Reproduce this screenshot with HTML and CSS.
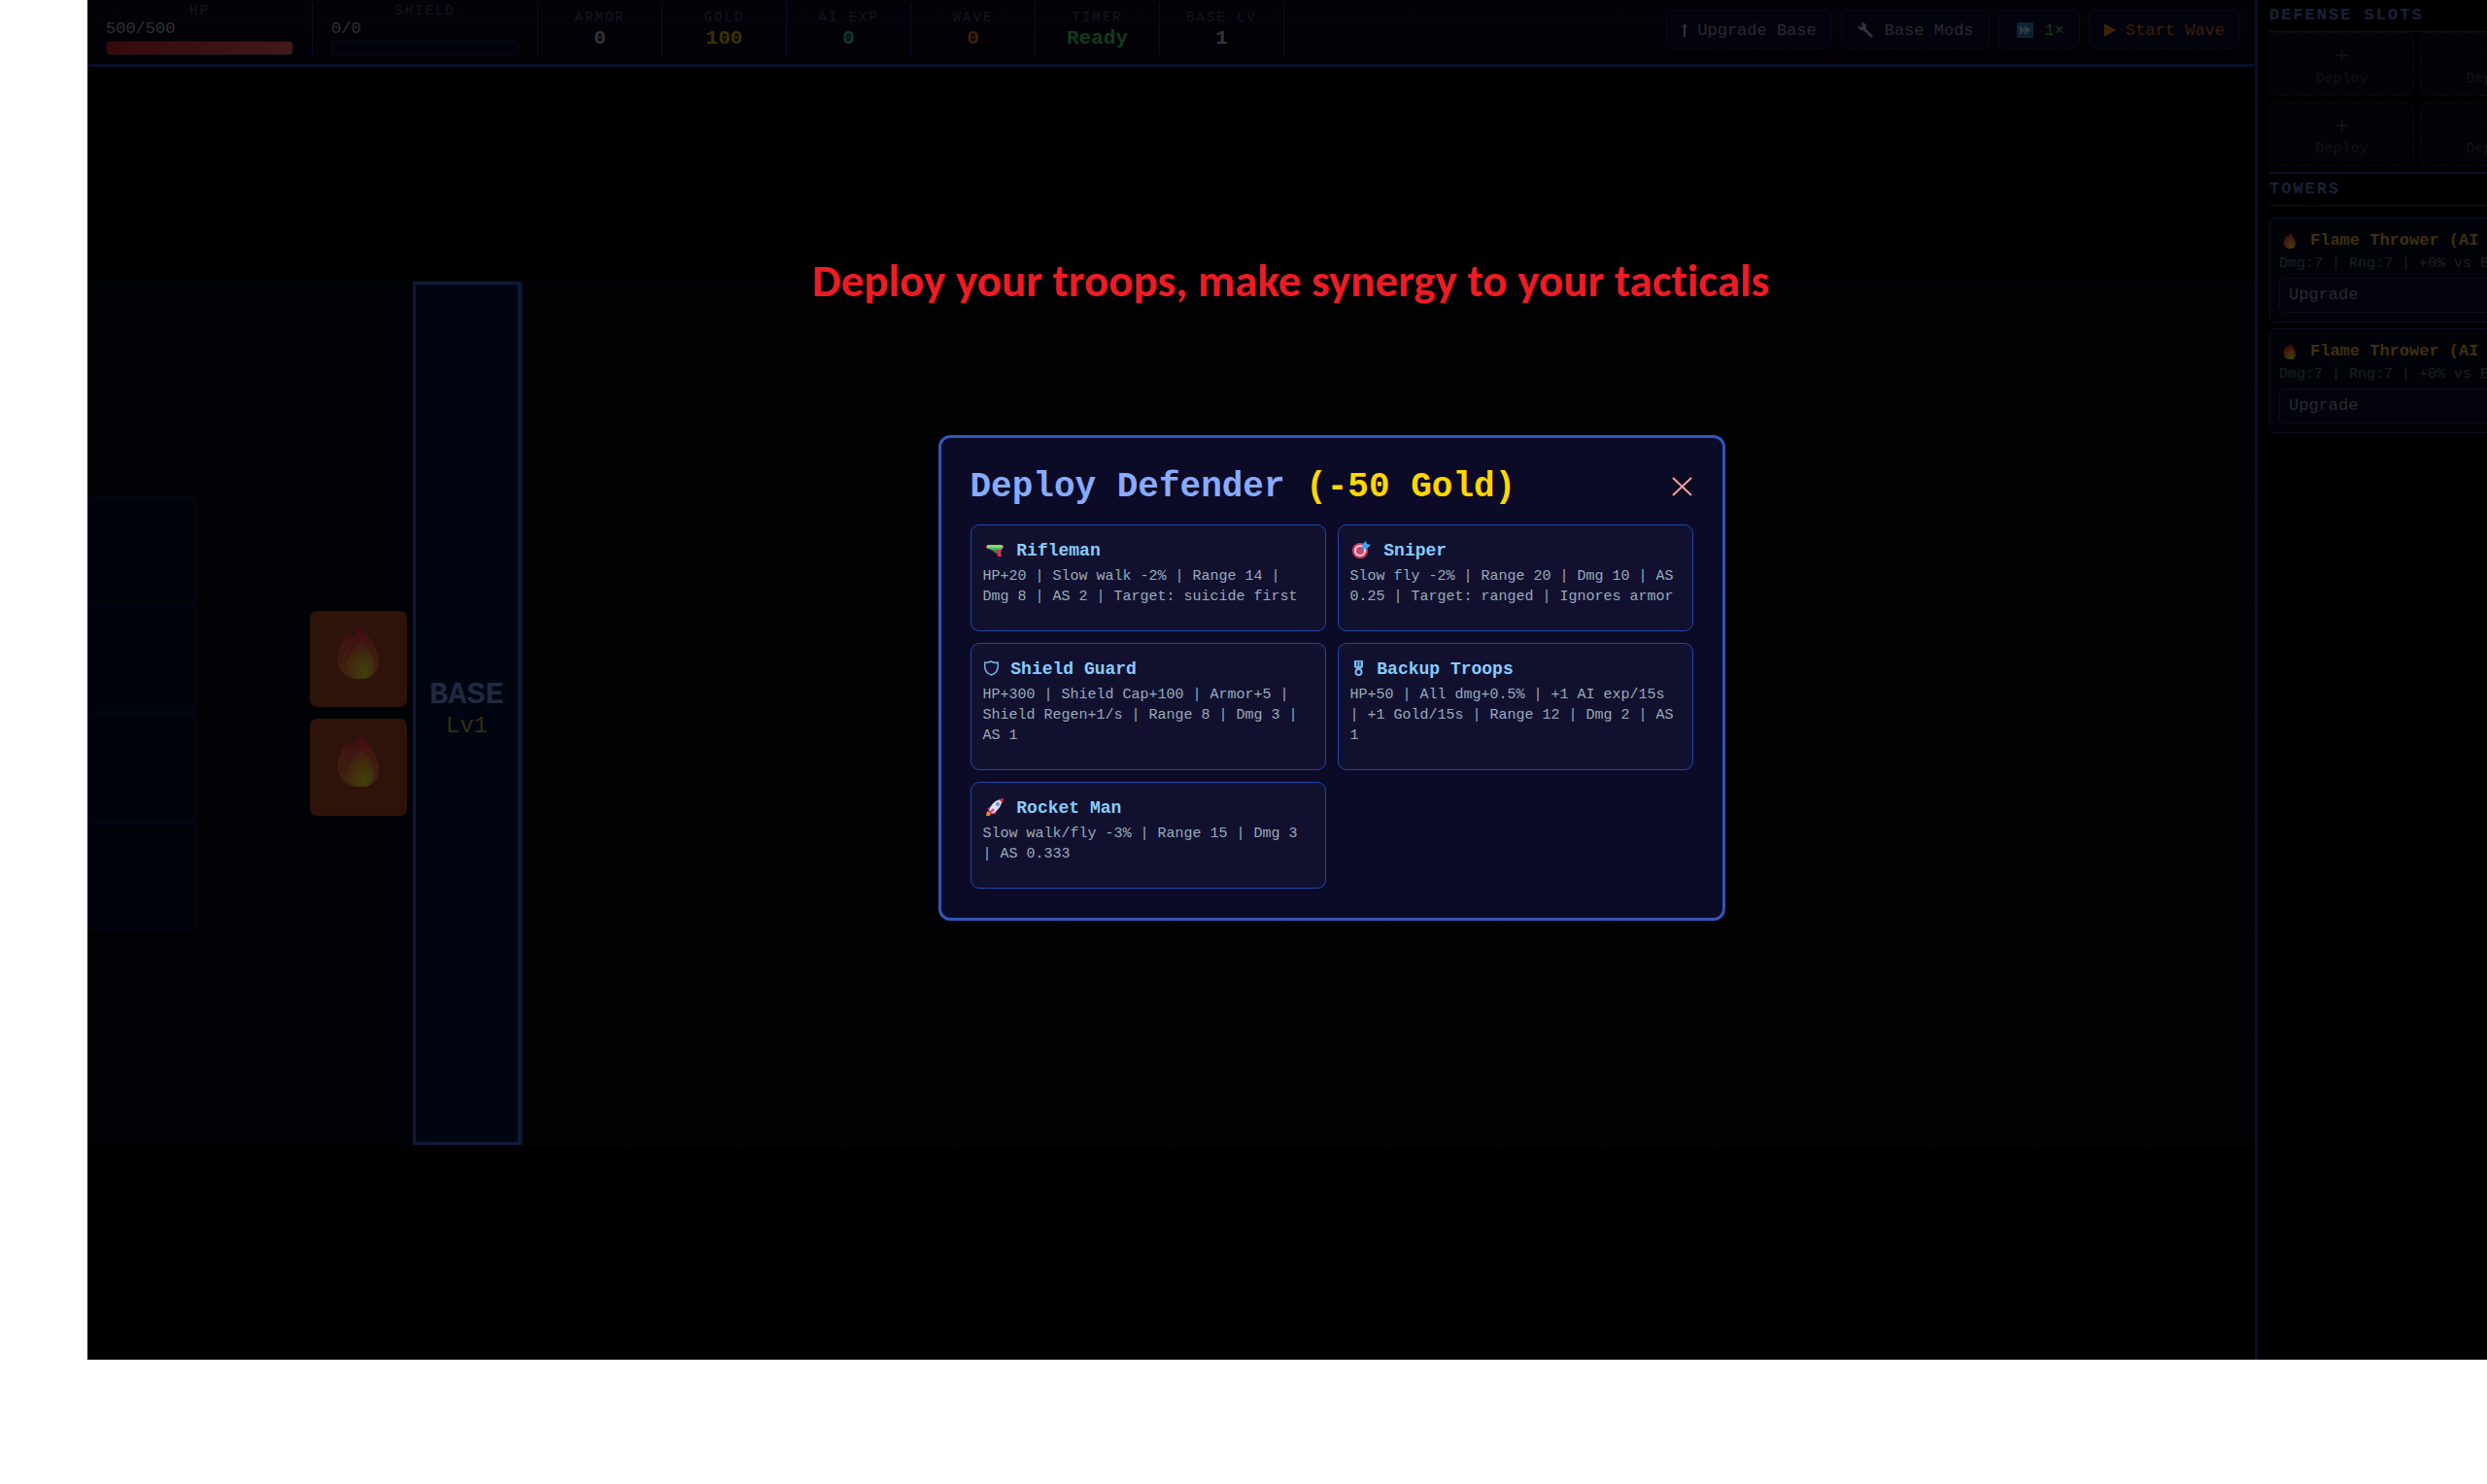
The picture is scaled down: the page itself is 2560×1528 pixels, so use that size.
FILE: index.html
```html
<!DOCTYPE html>
<html lang="en">
<head>
    <meta charset="UTF-8" />
    <meta name="viewport" content="width=device-width, initial-scale=1.0" />
    <title>Base Defense</title>
    <link rel="stylesheet" href="styles.css">
</head>

<body>
<!-- shared icons -->
<svg class="defs" width="0" height="0" aria-hidden="true">
    <defs>
        <linearGradient id="flameOuter" x1="0" y1="0" x2="0" y2="1">
            <stop offset="0" stop-color="#430a12" />
            <stop offset="0.5" stop-color="#401b10" />
            <stop offset="1" stop-color="#40220f" />
        </linearGradient>
        <radialGradient id="flameInner" cx="0.65" cy="0.8" r="0.7">
            <stop offset="0" stop-color="#42400a" />
            <stop offset="1" stop-color="#40200f" />
        </radialGradient>
        <symbol id="flame" viewBox="0 0 42 54">
            <path fill="url(#flameOuter)" d="M22 0C31 9 42 23 42 36C42 46 36 54 26 54H17C7 52 0 45 0 34C0 24 4 14 9 9C11 10 12 11 14 12C18 9 20 5 22 0Z" />
            <path fill="none" stroke="#36160e" stroke-width="1" d="M3 38C3 28 9 20 14 13M6 40C8 29 17 21 21 9" />
            <path fill="url(#flameInner)" d="M25 17C32 22 37 33 37 41C37 49 32 54 26 54H19C12 52 8 48 8 42C9 33 15 23 25 17Z" />
        </symbol>
    </defs>
</svg>

<div class="app">
    <div class="game">
        <header class="topbar">
            <div class="stat stat-bar">
                <span class="stat-label">HP</span>
                <span class="bar-text">500/500</span>
                <div class="bar"><div class="bar-fill" style="width: 100%"></div></div>
            </div>
            <div class="stat stat-bar">
                <span class="stat-label">SHIELD</span>
                <span class="bar-text">0/0</span>
                <div class="bar"></div>
            </div>
            <div class="stat"><span class="stat-label">ARMOR</span><span class="stat-value">0</span></div>
            <div class="stat"><span class="stat-label">GOLD</span><span class="stat-value gold">100</span></div>
            <div class="stat"><span class="stat-label">AI EXP</span><span class="stat-value exp">0</span></div>
            <div class="stat"><span class="stat-label">WAVE</span><span class="stat-value wave">0</span></div>
            <div class="stat"><span class="stat-label">TIMER</span><span class="stat-value ready">Ready</span></div>
            <div class="stat"><span class="stat-label">BASE LV</span><span class="stat-value">1</span></div>

            <div class="actions">
                <button type="button" class="btn">
                    <svg width="6" height="14" viewBox="0 0 6 14"><path fill="#2f2f36" d="M3 0L6 4H4V14H2V4H0Z" /></svg>
                    Upgrade Base
                </button>
                <button type="button" class="btn">
                    <svg width="19" height="18" viewBox="0 0 19 18"><path fill="none" stroke="#333338" stroke-width="3" d="M7 7L16 16" /><path fill="#333338" d="M5 1L6 5L4 6L2 4C1 7 3 10 7 9L10 8C11 4 9 1 5 1Z" /></svg>
                    Base Mods
                </button>
                <button type="button" class="btn speed">
                    <svg width="22" height="16" viewBox="0 0 22 16"><rect x="3" width="17" height="16" rx="1" fill="#0e2236" /><path fill="#333a40" d="M6 3L11 8L6 13ZM11 3L17 8L11 13Z" /></svg>
                    1×
                </button>
                <button type="button" class="btn start">
                    <svg width="12" height="14" viewBox="0 0 12 14"><path fill="#40210a" d="M0 0L12 7L0 14Z" /></svg>
                    Start Wave
                </button>
            </div>
        </header>

        <main class="field">
            <div class="board">
                <div class="zone"></div>
                <div class="cell cell-1"></div>
                <div class="cell cell-2"></div>
                <div class="cell cell-3"></div>
                <div class="cell cell-4"></div>
                <div class="tower tower-1"><svg width="42" height="54"><use href="#flame" /></svg></div>
                <div class="tower tower-2"><svg width="42" height="54"><use href="#flame" /></svg></div>
                <div class="base">
                    <strong class="base-name">BASE</strong>
                    <span class="base-level">Lv1</span>
                </div>
            </div>
        </main>
    </div>

    <aside class="sidebar">
        <h3 class="side-title">DEFENSE SLOTS</h3>
        <div class="slots">
            <button type="button" class="slot"><span class="plus">+</span>Deploy</button>
            <button type="button" class="slot"><span class="plus">+</span>Deploy</button>
            <button type="button" class="slot"><span class="plus">+</span>Deploy</button>
            <button type="button" class="slot"><span class="plus">+</span>Deploy</button>
        </div>
        <h3 class="side-title towers-title">TOWERS</h3>
        <div class="towers">
            <div class="tower-card">
                <div class="tower-name"><svg width="22" height="16"><use href="#flame" /></svg>Flame Thrower (AI Exp)</div>
                <div class="tower-info">Dmg:7 | Rng:7 | +0% vs Enemy</div>
                <button type="button" class="upgrade">Upgrade</button>
            </div>
            <div class="tower-card">
                <div class="tower-name"><svg width="22" height="16"><use href="#flame" /></svg>Flame Thrower (AI Exp)</div>
                <div class="tower-info">Dmg:7 | Rng:7 | +0% vs Enemy</div>
                <button type="button" class="upgrade">Upgrade</button>
            </div>
        </div>
    </aside>

    <div class="overlay">
        <div class="modal" role="dialog" aria-labelledby="modalTitle">
            <div class="modal-head">
                <h2 id="modalTitle">Deploy Defender <span class="cost">(-50 Gold)</span></h2>
                <button type="button" class="close" aria-label="Close">
                    <svg width="22" height="22" viewBox="0 0 22 22"><path fill="none" stroke="#ff9c9c" stroke-width="2" d="M1 1L20 19M20 1L1 19" /></svg>
                </button>
            </div>
            <div class="defenders">
                <button type="button" class="defender">
                    <span class="name"><svg width="24" height="20" viewBox="0 0 24 20"><path fill="#e8286a" d="M13 9H20L18 12L19 17H15L14 12Z" /><path fill="#5c7a2c" d="M8 10H15L16 15L12 13Z" /><rect x="4" y="5" width="16" height="4" rx="1" fill="#8bdc55" /><path fill="#38b886" d="M5 8H19L17 10H7Z" /><path fill="#f0386f" d="M3 6H4V8H3ZM20 6H21V8H20Z" /></svg> Rifleman</span>
                    <span class="desc">HP+20 | Slow walk -2% | Range 14 | Dmg 8 | AS 2 | Target: suicide first</span>
                </button>
                <button type="button" class="defender">
                    <span class="name"><svg width="24" height="20" viewBox="0 0 24 20"><circle cx="10" cy="11" r="8" fill="#dc3c62" /><circle cx="10" cy="11" r="5" fill="none" stroke="#e8d3e4" stroke-width="2" /><circle cx="10" cy="11" r="2" fill="#dc3c62" /><path fill="none" stroke="#2878bb" stroke-width="1" d="M9 12L14 7" /><path fill="#35a5ef" d="M12 5L16 1L17 4L21 5L17 9L13 9Z" /></svg> Sniper</span>
                    <span class="desc">Slow fly -2% | Range 20 | Dmg 10 | AS 0.25 | Target: ranged | Ignores armor</span>
                </button>
                <button type="button" class="defender">
                    <span class="name"><svg width="18" height="20" viewBox="0 0 18 20"><path fill="none" stroke="#78b8ec" stroke-width="1.4" d="M2 4C4 5 6 4 8 3C10 4 13 5 15 4C16 10 15 15 8.500 17C2 15 1 10 2 4Z" /></svg> Shield Guard</span>
                    <span class="desc">HP+300 | Shield Cap+100 | Armor+5 | Shield Regen+1/s | Range 8 | Dmg 3 | AS 1</span>
                </button>
                <button type="button" class="defender">
                    <span class="name"><svg width="17" height="20" viewBox="0 0 17 20"><path fill="#78b8ec" d="M4 2H13V9L10 11H7L4 9Z" /><path fill="none" stroke="#11112f" stroke-width="1" d="M7 3V8M10 3V8" /><circle cx="8.500" cy="14" r="3" fill="none" stroke="#78b8ec" stroke-width="2" /></svg> Backup Troops</span>
                    <span class="desc">HP+50 | All dmg+0.5% | +1 AI exp/15s | +1 Gold/15s | Range 12 | Dmg 2 | AS 1</span>
                </button>
                <button type="button" class="defender">
                    <span class="name"><svg width="24" height="20" viewBox="0 0 24 20"><path fill="#f08a24" d="M4 14L8 16L7 19L3 19Z" /><path fill="#f2306c" d="M4 12L8 9H12L9 14ZM12 18L14 14L13 10L9 14Z" /><path fill="#e4dcea" d="M6 14C8 7 13 2 19 2C20 8 15 14 9 17Z" /><path fill="#f0284c" d="M16 2L21 1L20 6Z" /><circle cx="15" cy="7" r="2" fill="#4e9be2" /><path fill="none" stroke="#f2306c" stroke-width="2" d="M7 16L11 12" /></svg> Rocket Man</span>
                    <span class="desc">Slow walk/fly -3% | Range 15 | Dmg 3 | AS 0.333</span>
                </button>
            </div>
        </div>
    </div>

    <p class="caption">Deploy your troops, make synergy to your tacticals</p>
</div>
</body>
</html>
```
FILE: styles.css
```css
* {
    box-sizing: border-box;
}
body {
    margin: 0;
    background: #fff;
    overflow: hidden;
    font-family: "Courier New", "Liberation Mono", monospace;
}
button {
    font-family: inherit;
    margin: 0;
    cursor: pointer;
}
.defs {
    position: absolute;
}
/* the sidebar runs past the right edge of the window */
.app {
    position: relative;
    display: flex;
    height: calc(100vh - 128px);
    margin-left: 90px;
    margin-right: -91px;
    background: #000;
}
.game {
    flex: 1;
    display: flex;
    flex-direction: column;
}

/* top bar */
.topbar {
    display: flex;
    align-items: center;
    padding: 3px 15px 9px 0;
    background: linear-gradient(#020309, #030105);
    border-bottom: 3px solid #081028;
}
.stat {
    display: flex;
    flex-direction: column;
    align-items: center;
    justify-content: center;
    width: 128px;
    height: 54px;
    border-right: 1px solid #081028;
}
.stat-label {
    font-size: 14px;
    line-height: 20px;
    letter-spacing: 2px;
    color: #16161f;
}
.stat-value {
    font-size: 21px;
    line-height: 24px;
    font-weight: bold;
    color: #33333b;
}
.gold {
    color: #3c3200;
}
.exp {
    color: #103a2a;
}
.wave {
    color: #40200a;
}
.ready {
    color: #123c1c;
}
.stat-bar {
    width: 232px;
    padding: 0 19px;
    align-items: stretch;
    justify-content: flex-end;
}
.stat-bar .stat-label {
    line-height: 17px;
    text-align: center;
}
.bar-text {
    font-size: 17px;
    line-height: 20px;
    padding-bottom: 2px;
    color: #303036;
}
.bar {
    height: 15px;
    border: 1px solid #0c0d14;
    border-radius: 4px;
    background: #02030c;
    overflow: hidden;
}
.bar-fill {
    height: 100%;
    background: linear-gradient(90deg, #360a0a, #431818);
}
.actions {
    display: flex;
    gap: 9px;
    margin-left: auto;
}
.btn {
    display: flex;
    align-items: center;
    gap: 10px;
    height: 40px;
    padding: 2px 15px 0;
    border: 1px solid #0a0b14;
    border-radius: 5px;
    background: #02030c;
    font-size: 17px;
    white-space: nowrap;
    color: #2a2a32;
}
.speed {
    color: #193620;
}
.start {
    color: #3c1e0a;
}

/* board */
.field {
    flex: 1;
    display: flex;
    align-items: center;
}
.board {
    width: 100%;
    aspect-ratio: 20 / 8;
    display: grid;
    grid-template-columns: repeat(20, 1fr);
    grid-template-rows: repeat(8, 1fr);
    background-color: #020103;
    background-image: linear-gradient(90deg, #040406 2px, transparent 2px), linear-gradient(#040406 2px, transparent 2px);
    background-size: calc(100% / 20) calc(100% / 8);
}
.zone {
    grid-column: 1 / 4;
    grid-row: 1 / 9;
    background: #010206;
}
.cell {
    grid-column: 1;
    border: 2px solid #020511;
    background: #01030b;
}
.cell-1 {
    grid-row: 3;
}
.cell-2 {
    grid-row: 4;
}
.cell-3 {
    grid-row: 5;
}
.cell-4 {
    grid-row: 6;
}
.tower {
    grid-column: 3;
    margin: 6px;
    padding-bottom: 14px;
    display: flex;
    align-items: center;
    justify-content: center;
    border-radius: 7px;
    background: #2e130b;
}
.tower-1 {
    grid-row: 4;
}
.tower-2 {
    grid-row: 5;
}
.base {
    grid-column: 4;
    grid-row: 1 / 9;
    display: flex;
    flex-direction: column;
    align-items: center;
    justify-content: center;
    margin: 2px 0;
    padding-bottom: 5px;
    border: 3px solid #11193a;
    box-shadow: 2px 0 #0a1228;
    background: #000611;
    line-height: 32px;
}
.base-name {
    font-size: 32px;
    color: #202a40;
}
.base-level {
    font-size: 24px;
    color: #352c10;
}

/* sidebar */
.sidebar {
    width: 330px;
    padding: 0 11px 0 12px;
    border-left: 3px solid #081028;
    background: #000001;
}
.side-title {
    margin: 0;
    height: 33px;
    font-size: 17px;
    line-height: 32px;
    letter-spacing: 2px;
    color: #182238;
    border-bottom: 1px solid #081028;
}
.towers-title {
    margin-top: 6px;
    height: 35px;
    border-top: 2px solid #081028;
}
.slots {
    display: grid;
    grid-template-columns: 1fr 1fr;
    gap: 6px;
}
.slot {
    display: flex;
    flex-direction: column;
    align-items: center;
    justify-content: center;
    height: 66px;
    padding: 6px 0 0;
    border: 1px dashed #0c0c13;
    border-radius: 5px;
    background: #020207;
    font-size: 15px;
    line-height: 20px;
    color: #121217;
}
.plus {
    font-size: 24px;
    line-height: 26px;
}
.towers {
    display: flex;
    flex-direction: column;
    gap: 6px;
    margin-top: 12px;
}
.tower-card {
    height: 108px;
    padding: 9px;
    border: 1px solid #081028;
    border-radius: 5px;
    background: #020308;
    white-space: nowrap;
    overflow: hidden;
}
.tower-name {
    display: flex;
    align-items: center;
    gap: 10px;
    font-size: 17px;
    line-height: 27px;
    font-weight: bold;
    color: #3f300f;
}
.tower-info {
    font-size: 15px;
    line-height: 21px;
    color: #172126;
}
.upgrade {
    display: block;
    width: 100%;
    height: 36px;
    margin-top: 4px;
    padding: 0 9px 2px;
    border: 1px solid #0c0d18;
    border-radius: 5px;
    background: #02030c;
    font-size: 17px;
    text-align: left;
    color: #2a2a32;
}

/* deploy modal */
.overlay {
    position: absolute;
    inset: 0;
    display: flex;
    align-items: center;
    justify-content: center;
    padding-bottom: 4px;
}
.modal {
    width: 810px;
    padding: 30px;
    border: 3px solid #3355bb;
    border-radius: 12px;
    background: #0c0b27;
}
.modal-head {
    display: flex;
    align-items: center;
    justify-content: space-between;
    margin-bottom: 18px;
}
.modal-head h2 {
    margin: 0;
    font-size: 36px;
    line-height: 41px;
    font-weight: bold;
    color: #88aaff;
}
.cost {
    color: #ffd700;
}
.close {
    display: flex;
    padding: 0;
    border: none;
    background: none;
}
.defenders {
    display: grid;
    grid-template-columns: 1fr 1fr;
    gap: 12px;
}
.defender {
    display: flex;
    flex-direction: column;
    padding: 13px 12px 24px;
    border: 1px solid #2244aa;
    border-radius: 9px;
    background: #11112f;
    text-align: left;
}
.name {
    margin-bottom: 3px;
    font-size: 18px;
    line-height: 26px;
    font-weight: bold;
    color: #88ccff;
}
.name svg {
    vertical-align: -4px;
}
.desc {
    font-size: 15px;
    line-height: 21px;
    color: #99aabb;
}

.caption {
    position: absolute;
    top: 264px;
    left: 746px;
    margin: 0;
    font-family: Calibri, Carlito, Lato, sans-serif;
    font-size: 47px;
    line-height: 50px;
    font-weight: bold;
    font-variant-ligatures: none;
    white-space: nowrap;
    color: #ed1c24;
}
```
